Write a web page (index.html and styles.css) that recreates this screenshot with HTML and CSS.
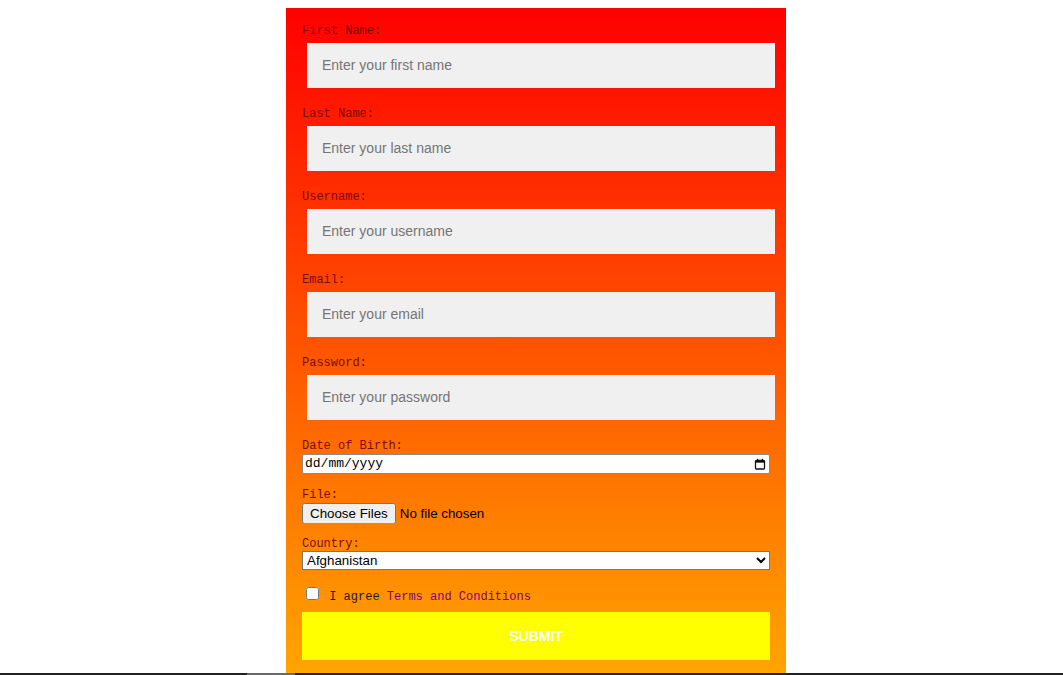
FILE: index.html
```html
<!DOCTYPE html>
<html lang="en">
<head>
<meta charset="utf-8">
<title>Registration Form</title>
<link rel="stylesheet" href="styles.css">
</head>
<body>
<form class="signup">
  <div class="field">
    <label class="lbl" for="fn">First Name:</label>
    <input class="text-in" id="fn" type="text" placeholder="Enter your first name">
  </div>
  <div class="field">
    <label class="lbl" for="ln">Last Name:</label>
    <input class="text-in" id="ln" type="text" placeholder="Enter your last name">
  </div>
  <div class="field">
    <label class="lbl" for="un">Username:</label>
    <input class="text-in" id="un" type="text" placeholder="Enter your username">
  </div>
  <div class="field">
    <label class="lbl" for="em">Email:</label>
    <input class="text-in" id="em" type="email" placeholder="Enter your email">
  </div>
  <div class="field">
    <label class="lbl" for="pw">Password:</label>
    <input class="text-in" id="pw" type="password" placeholder="Enter your password">
  </div>
  <div class="field-date">
    <label class="lbl" for="dob">Date of Birth:</label>
    <div class="date-wrap">
      <input class="date-in" id="dob" type="text" placeholder="dd/mm/yyyy">
      <svg class="cal-icon" width="12" height="12" viewBox="0 0 12 12" aria-hidden="true">
        <rect x="1.5" y="2.5" width="9" height="8.5" rx="1" fill="none" stroke="#111" stroke-width="1.3"/>
        <rect x="1.5" y="2.5" width="9" height="2.2" fill="#111"/>
        <rect x="3" y="0.8" width="1.3" height="2" fill="#111"/>
        <rect x="7.7" y="0.8" width="1.3" height="2" fill="#111"/>
      </svg>
    </div>
  </div>
  <div class="field-file">
    <label class="lbl" for="file">File:</label>
    <input class="file-in" id="file" type="file" multiple>
  </div>
  <div class="field-country">
    <label class="lbl" for="country">Country:</label>
    <select class="select-in" id="country">
      <option>Afghanistan</option>
      <option>Albania</option>
      <option>Algeria</option>
      <option>Andorra</option>
      <option>Angola</option>
    </select>
  </div>
  <div class="agree-row">
    <input class="check" type="checkbox" id="agree"> <label class="agree" for="agree">I agree <a class="terms" href="#">Terms and Conditions</a></label>
  </div>
  <button class="submit" type="submit">SUBMIT</button>
</form>
<div class="bottom-bar"><span class="bottom-thumb"></span></div>
</body>
</html>
```
FILE: styles.css
```css
html, body {
  background: #ffffff;
}
body {
  margin: 8px;
  font-family: "Liberation Sans", Arial, sans-serif;
}
.signup {
  width: 500px;
  box-sizing: border-box;
  margin-left: 278px;
  padding: 17px 16px 16px 16px;
  background: linear-gradient(to bottom, #ff0000, #ffa500);
}
.lbl {
  display: block;
  font-family: "Liberation Mono", "Courier New", monospace;
  font-size: 12px;
  line-height: 13.6px;
  color: #7a0c00;
}
.field {
  margin-bottom: 20.4px;
}
.text-in {
  display: block;
  box-sizing: border-box;
  width: 100%;
  height: 45px;
  margin: 4px 0 5px 5px;
  padding: 0 15px;
  border: none;
  outline: none;
  background: #f0f0f0;
  font-family: "Liberation Sans", Arial, sans-serif;
  font-size: 14px;
  color: #333;
}
.text-in::placeholder {
  color: #757575;
}
.field-date {
  margin-bottom: 15.4px;
}
.date-wrap {
  position: relative;
}
.date-in {
  display: block;
  box-sizing: border-box;
  width: 100%;
  height: 20px;
  margin: 0;
  padding: 0 24px 0 2px;
  border: 1px solid #8a8a8a;
  border-radius: 2px;
  background: #fff;
  font-family: "Liberation Mono", "Courier New", monospace;
  font-size: 13px;
  color: #000;
  outline: none;
}
.date-in::placeholder {
  color: #000;
}
.cal-icon {
  position: absolute;
  right: 4px;
  top: 4px;
}
.field-file {
  margin-bottom: 15.4px;
}
.file-in {
  display: block;
  margin: 0;
  height: 20px;
  font-family: "Liberation Sans", Arial, sans-serif;
  font-size: 13.33px;
  color: #000;
}
.select-in {
  display: block;
  box-sizing: border-box;
  width: 100%;
  height: 19px;
  margin: 0;
  font-family: "Liberation Sans", Arial, sans-serif;
  font-size: 13.33px;
  background: #fff;
}
.agree-row {
  margin-top: 14px;
  font-family: "Liberation Mono", "Courier New", monospace;
  font-size: 12px;
  color: #222;
}
.check {
  margin: 3px 3px 3px 4px;
}
.agree {
  color: #2a1a10;
}
.terms {
  color: #800080;
  text-decoration: none;
}
.submit {
  display: block;
  width: 100%;
  height: 48px;
  margin-top: 8px;
  border: none;
  background: #ffff00;
  color: #ffffff;
  font-family: "Liberation Sans", Arial, sans-serif;
  font-weight: bold;
  font-size: 14px;
  cursor: pointer;
}
.bottom-bar {
  position: fixed;
  left: 0;
  right: 0;
  bottom: 0;
  height: 2px;
  background: #222;
}
.bottom-thumb {
  position: absolute;
  left: 247px;
  width: 48px;
  top: 0;
  bottom: 0;
  background: #6a6a6a;
}
```
